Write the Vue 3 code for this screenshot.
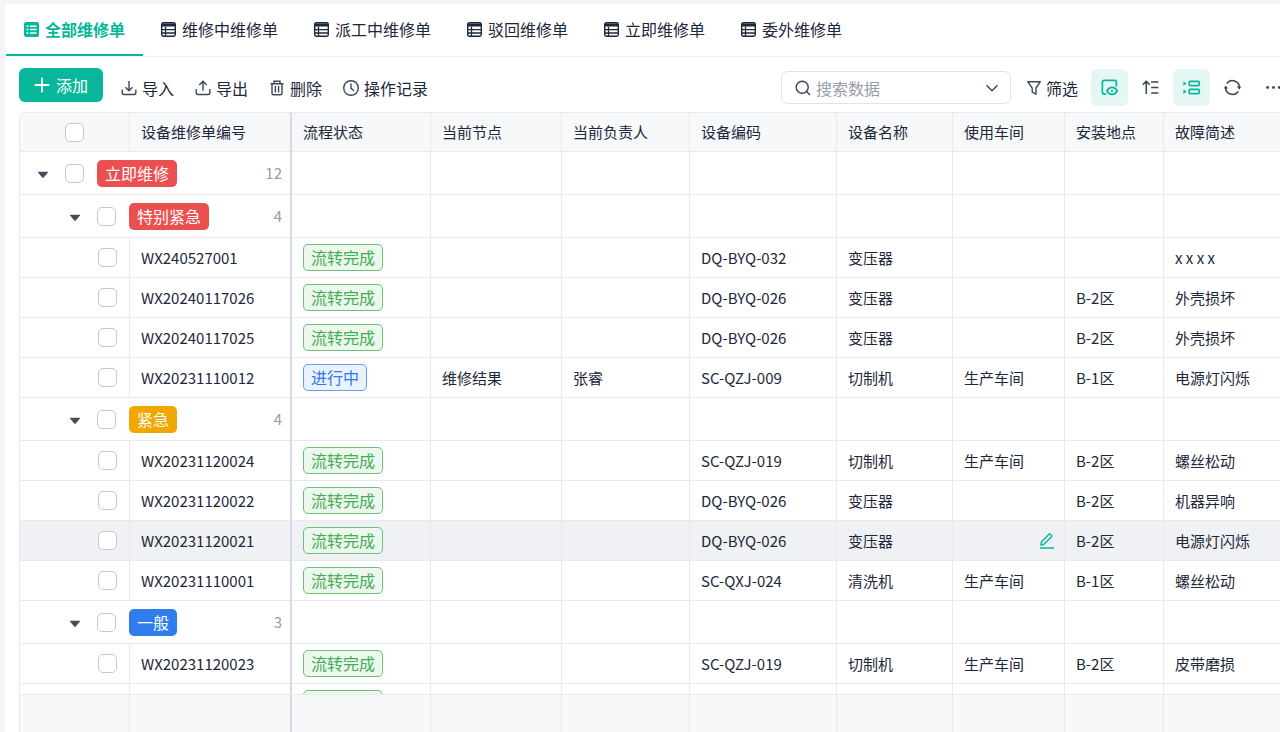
<script setup>
import { ref } from 'vue'

const tabs = ['全部维修单', '维修中维修单', '派工中维修单', '驳回维修单', '立即维修单', '委外维修单']
const active = ref(0)
const keyword = ref('')

const columns = ['流程状态', '当前节点', '当前负责人', '设备编码', '设备名称', '使用车间', '安装地点', '故障简述']

const done = '流转完成'
const rows = [
  { group: '立即维修', level: 1, tone: 'red', count: 12 },
  { group: '特别紧急', level: 2, tone: 'red', count: 4 },
  { id: 'WX240527001', status: done, cells: ['', '', 'DQ-BYQ-032', '变压器', '', '', 'x x x x'] },
  { id: 'WX20240117026', status: done, cells: ['', '', 'DQ-BYQ-026', '变压器', '', 'B-2区', '外壳损坏'] },
  { id: 'WX20240117025', status: done, cells: ['', '', 'DQ-BYQ-026', '变压器', '', 'B-2区', '外壳损坏'] },
  { id: 'WX20231110012', status: '进行中', cells: ['维修结果', '张睿', 'SC-QZJ-009', '切制机', '生产车间', 'B-1区', '电源灯闪烁'] },
  { group: '紧急', level: 2, tone: 'amber', count: 4 },
  { id: 'WX20231120024', status: done, cells: ['', '', 'SC-QZJ-019', '切制机', '生产车间', 'B-2区', '螺丝松动'] },
  { id: 'WX20231120022', status: done, cells: ['', '', 'DQ-BYQ-026', '变压器', '', 'B-2区', '机器异响'] },
  { id: 'WX20231120021', status: done, hover: true, cells: ['', '', 'DQ-BYQ-026', '变压器', '', 'B-2区', '电源灯闪烁'] },
  { id: 'WX20231110001', status: done, cells: ['', '', 'SC-QXJ-024', '清洗机', '生产车间', 'B-1区', '螺丝松动'] },
  { group: '一般', level: 2, tone: 'blue', count: 3 },
  { id: 'WX20231120023', status: done, cells: ['', '', 'SC-QZJ-019', '切制机', '生产车间', 'B-2区', '皮带磨损'] },
  { id: '', status: done, cells: ['', '', '', '', '', '', ''] },
]
</script>

<template>
  <main class="page">
    <nav class="tabs">
      <button v-for="(t, i) in tabs" :key="t" class="tab" :class="{ active: i === active }" @click="active = i">
        <svg v-if="i === active" class="ico" viewBox="0 0 15 15" aria-hidden="true">
          <rect width="15" height="15" rx="2.2" fill="currentColor" />
          <path d="M2.500 4.200h2M6 4.200h6.500M2.500 7.600h2M6 7.600h6.500M2.500 11h2M6 11h6.500" stroke="#fff" stroke-width="1.500" fill="none" />
        </svg>
        <svg v-else class="ico" viewBox="0 0 15 15" aria-hidden="true">
          <rect x=".7" y=".7" width="13.600" height="13.600" rx="1.700" fill="none" stroke="currentColor" stroke-width="1.400" />
          <path d="M.7 1.500h13.600v3H.7z" fill="currentColor" />
          <path d="M4.500 4.500v9.500M1 7.700h13M1 11h13" stroke="currentColor" stroke-width="1.300" fill="none" />
        </svg>
        <span>{{ t }}</span>
      </button>
    </nav>

    <div class="toolbar">
      <button class="add">
        <svg class="ico" viewBox="0 0 16 16" aria-hidden="true"><path d="M8 .7v14.600M.7 8h14.600" stroke="currentColor" stroke-width="1.800" /></svg>
        <span>添加</span>
      </button>
      <div class="actions">
        <button class="plain">
          <svg class="ico line" viewBox="0 0 16 16" aria-hidden="true"><path d="M8 1v9.500M4.500 7.200L8 10.700l3.500-3.500M1.200 9.500v3.200q0 1.800 1.800 1.800h10q1.800 0 1.800-1.800V9.500" /></svg>
          <span>导入</span>
        </button>
        <button class="plain">
          <svg class="ico line" viewBox="0 0 16 16" aria-hidden="true"><path d="M8 10.800v-9.300M4.300 5L8 1.300 11.700 5M1.200 9v3.700q0 1.800 1.800 1.800h10q1.800 0 1.800-1.800V9" /></svg>
          <span>导出</span>
        </button>
        <button class="plain">
          <svg class="ico line" viewBox="0 0 16 16" aria-hidden="true"><path d="M1.500 3.700h13M5 3.500V1.300h6v2.200M3 3.700v9.500q0 1.500 1.500 1.500h7q1.500 0 1.500-1.500V3.700M6.400 6v6.500M9.600 6v6.500" /></svg>
          <span>删除</span>
        </button>
        <button class="plain">
          <svg class="ico line" viewBox="0 0 16 16" aria-hidden="true"><circle cx="8" cy="8" r="7.300" /><path d="M8 3.500V8.300l3 2.400" /></svg>
          <span>操作记录</span>
        </button>
      </div>

      <label class="search">
        <svg class="ico line" viewBox="0 0 16 16" aria-hidden="true"><circle cx="7.200" cy="7.200" r="6" /><path d="M11.600 11.600L15 15" /></svg>
        <input v-model="keyword" type="text" placeholder="搜索数据" aria-label="搜索数据" />
        <svg class="ico line" viewBox="0 0 16 16" aria-hidden="true"><path d="M2.500 5.300L8 10.800l5.500-5.500" /></svg>
      </label>
      <button class="plain filter">
        <svg class="ico line" viewBox="0 0 16 16" aria-hidden="true"><path d="M1.800 1.800h12.400L10 8v6.200L6.200 12.200V8z" stroke-linejoin="round" /></svg>
        <span>筛选</span>
      </button>
      <div class="tools">
        <button class="tool on" aria-label="显示设置">
          <svg class="ico line" viewBox="0 0 16 16" aria-hidden="true"><path d="M4.800 14.200H3Q1.300 14.200 1.300 12.500V3Q1.300 1.300 3 1.300h9.800q1.700 0 1.700 1.700v4" /><path d="M5.500 11.200q1.800-3.400 4.900-3.400t4.900 3.400q-1.800 3.300-4.900 3.300t-4.900-3.300z" /><circle cx="10.400" cy="11.200" r="1" fill="currentColor" stroke="none" /></svg>
        </button>
        <button class="tool" aria-label="排序">
          <svg class="ico line" viewBox="0 0 16 16" aria-hidden="true"><path d="M4 14.200V2.300M.8 5.300L4 2.100l3.200 3.200M8.600 2.800h6.800M8.600 8h6.800M8.600 13.200h6.800" /></svg>
        </button>
        <button class="tool on" aria-label="分组">
          <svg class="ico line" viewBox="0 0 16 16" aria-hidden="true"><rect x="5.800" y="2.200" width="9.500" height="4" rx="1" /><rect x="5.800" y="9.800" width="9.500" height="4" rx="1" /><path d="M.4 2l2.800 2.200L.4 6.400zM.4 9.600l2.800 2.200-2.800 2.200z" fill="currentColor" stroke="none" /></svg>
        </button>
        <button class="tool" aria-label="刷新">
          <svg class="ico line" viewBox="0 0 16 16" aria-hidden="true"><path d="M2.600 4.400A6.500 6.500 0 0 1 14.500 8.300M13.400 11.600A6.500 6.500 0 0 1 1.500 7.700" /><path d="M12 7h4.200l-1.700 3zM4 9H-.2l1.700-3z" fill="currentColor" stroke="none" /></svg>
        </button>
        <button class="tool" aria-label="更多">
          <svg class="ico" viewBox="0 0 16 16" aria-hidden="true"><g fill="#3b4658"><circle cx="2.500" cy="8" r="1.300" /><circle cx="8" cy="8" r="1.300" /><circle cx="13.500" cy="8" r="1.300" /></g></svg>
        </button>
      </div>
    </div>

    <section class="grid">
      <div class="scroll">
        <table>
          <colgroup>
            <col class="c-check" /><col class="c-id" /><col class="c-status" /><col class="c-node" /><col class="c-owner" />
            <col class="c-code" /><col class="c-name" /><col class="c-shop" /><col class="c-place" /><col />
          </colgroup>
          <thead>
            <tr>
              <th><div class="lead lv1"><input type="checkbox" aria-label="全选" /></div></th>
              <th class="pin">设备维修单编号</th>
              <th v-for="c in columns" :key="c">{{ c }}</th>
            </tr>
          </thead>
          <tbody>
            <tr v-for="(r, i) in rows" :key="i" :class="{ group: r.group, hover: r.hover }">
              <template v-if="r.group">
                <td colspan="2" class="pin">
                  <div class="lead" :class="'lv' + r.level">
                    <button class="fold" :aria-label="'折叠' + r.group">
                      <svg viewBox="0 0 12 8" aria-hidden="true"><path d="M1.500.8h9q1 0 .4.8L6.800 6.500q-.8.900-1.600 0L1.100 1.600Q.5.800 1.500.8z" fill="currentColor" /></svg>
                    </button>
                    <input type="checkbox" :aria-label="r.group" />
                    <span class="tag" :class="r.tone">{{ r.group }}</span>
                    <span class="count">{{ r.count }}</span>
                  </div>
                </td>
                <td v-for="c in columns" :key="c"></td>
              </template>
              <template v-else>
                <td><div class="lead lv2"><input type="checkbox" :aria-label="r.id || '维修单'" /></div></td>
                <td class="pin">{{ r.id }}</td>
                <td><span class="status" :class="{ doing: r.status !== done }">{{ r.status }}</span></td>
                <td v-for="(c, k) in r.cells" :key="k">
                  <button v-if="r.hover && k === 4" class="edit" aria-label="编辑">
                    <svg class="ico" viewBox="0 0 16 16" aria-hidden="true"><path d="M2 12l.5-3.300L9.800 1.500q.9-.9 1.800 0l.7.700q.9.900 0 1.800L5 11.300zM1 15h14" fill="none" stroke="currentColor" stroke-width="1.500" stroke-linejoin="round" /></svg>
                  </button>
                  <template v-else>{{ c }}</template>
                </td>
              </template>
            </tr>
          </tbody>
        </table>
      </div>
      <div class="summary">
        <span class="c-check"></span><span class="c-id pin"></span><span class="c-status"></span><span class="c-node"></span><span class="c-owner"></span>
        <span class="c-code"></span><span class="c-name"></span><span class="c-shop"></span><span class="c-place"></span>
      </div>
    </section>
  </main>
</template>

<style>
body {
  background: #f4f4f9;
}
</style>

<style scoped>
* {
  box-sizing: border-box;
}
.page {
  display: flex;
  flex-direction: column;
  height: 100vh;
  overflow: hidden;
  border-top: 4px solid #f4f4f9;
  border-left: 5px solid #f4f4f9;
  background: #fff;
  color: #1c273a;
  font: 16px/24px "Noto Sans CJK SC", sans-serif;
}
button {
  display: inline-flex;
  align-items: center;
  padding: 0;
  border: 0;
  background: none;
  color: inherit;
  font: inherit;
  white-space: nowrap;
}
.ico {
  flex: none;
  width: 16px;
  height: 16px;
}
.line {
  fill: none;
  stroke: currentColor;
  stroke-width: 1.4;
  color: #3b4658;
}
.tabs {
  display: flex;
  flex: none;
  height: 53px;
  padding-left: 1px;
  border-bottom: 1px solid #eeeff2;
}
.tab {
  gap: 6px;
  height: 52px;
  padding: 0 18px;
  border-bottom: 2px solid transparent;
}
.tab.active {
  border-color: #07b79a;
  color: #07b79a;
  font-weight: 700;
}
.tab .ico {
  width: 15px;
  height: 15px;
}
.toolbar {
  display: flex;
  flex: none;
  align-items: center;
  height: 55px;
  padding: 11px 0 5px 14px;
}
.add {
  align-self: flex-start;
  justify-content: center;
  gap: 6px;
  width: 84px;
  height: 34px;
  border-radius: 6px;
  background: #07b79a;
  color: #fff;
}
.actions {
  display: flex;
  gap: 21px;
  margin: 0 auto 0 18px;
}
.plain {
  gap: 5px;
}
.search {
  display: flex;
  align-items: center;
  gap: 5px;
  width: 230px;
  height: 33px;
  padding: 0 10px 0 13px;
  border: 1px solid #e1e3e8;
  border-radius: 7px;
}
.search input {
  flex: 1;
  min-width: 0;
  padding: 0;
  border: 0;
  outline: 0;
  background: none;
  color: inherit;
  font: inherit;
}
.search input::placeholder {
  color: #979ca5;
}
.filter {
  gap: 4px;
  margin: 0 13px 0 15px;
}
.tools {
  display: flex;
  gap: 4px;
  margin-right: -12px;
}
.tool {
  justify-content: center;
  width: 37px;
  height: 37px;
  border-radius: 6px;
}
.tool .ico {
  width: 17px;
  height: 17px;
  overflow: visible;
}
.tool.on {
  background: #e5f7f4;
}
.tool.on .ico {
  color: #07b79a;
  stroke-width: 1.6;
}
.grid {
  display: flex;
  flex: 1;
  flex-direction: column;
  min-height: 0;
  margin-left: 14px;
  overflow: hidden;
  border: solid #e8e9ed;
  border-width: 1px 0 0 1px;
  border-top-left-radius: 6px;
}
.scroll {
  flex: 1;
  min-height: 0;
  overflow: hidden;
}
table {
  width: 100%;
  table-layout: fixed;
  border-collapse: separate;
  border-spacing: 0;
  font-size: 15px;
  line-height: 22px;
}
.c-check { width: 110px; }
.c-id { width: 162px; }
.c-status { width: 139px; }
.c-node { width: 131px; }
.c-owner { width: 128px; }
.c-code { width: 147px; }
.c-name { width: 116px; }
.c-shop { width: 112px; }
.c-place { width: 99px; }
th,
td {
  height: 40px;
  padding: 0 11px;
  border: solid #e8e9ed;
  border-width: 0 1px 1px 0;
  font-weight: 400;
  text-align: left;
  white-space: nowrap;
}
th:last-child,
td:last-child {
  border-right: 0;
}
th {
  height: 39px;
  background: #f7f8fa;
}
.group td {
  height: 43px;
}
.hover td {
  background: #f0f1f5;
}
.pin {
  border-right: 2px solid #d6dae2;
}
.lead {
  display: flex;
  align-items: center;
}
.lv1 {
  padding-left: 34px;
}
.lv2 {
  padding-left: 67px;
}
.group .lv1 {
  padding-left: 6px;
}
.group .lv2 {
  padding-left: 38px;
}
.fold {
  margin-right: 16px;
  padding-top: 3px;
  color: #454d5c;
}
.fold svg {
  width: 12px;
  height: 8px;
}
input[type="checkbox"] {
  flex: none;
  width: 19px;
  height: 19px;
  margin: 0;
  appearance: none;
  border: 1px solid #c3c7cf;
  border-radius: 5px;
  background: #fff;
}
.tag,
.status {
  display: inline-block;
  height: 27px;
  border: 1px solid;
  border-radius: 5px;
  padding: 0 7px;
  font-size: 16px;
  line-height: 25px;
  vertical-align: middle;
}
.tag {
  margin-left: 13px;
  border-color: transparent;
  color: #fff;
}
.red { background: #eb5050; }
.amber { background: #f0a800; }
.blue { background: #2f7deb; }
.status {
  border-color: #6cc179;
  background: #ecf7ee;
  color: #43ad52;
}
.status.doing {
  border-color: #659bf5;
  background: #eaf2fe;
  color: #3377f0;
}
.count {
  margin-left: auto;
  margin-right: -3px;
  color: #979ca5;
}
.edit {
  display: flex;
  margin-left: auto;
  margin-right: -2px;
  color: #07b79a;
}
.summary {
  display: flex;
  flex: none;
  height: 38px;
  border-top: 1px solid #e8e9ed;
  background: #f7f8fa;
}
.summary span {
  flex: none;
  border-right: 1px solid #e8e9ed;
}
.summary .pin {
  border-right: 2px solid #d6dae2;
}
</style>
